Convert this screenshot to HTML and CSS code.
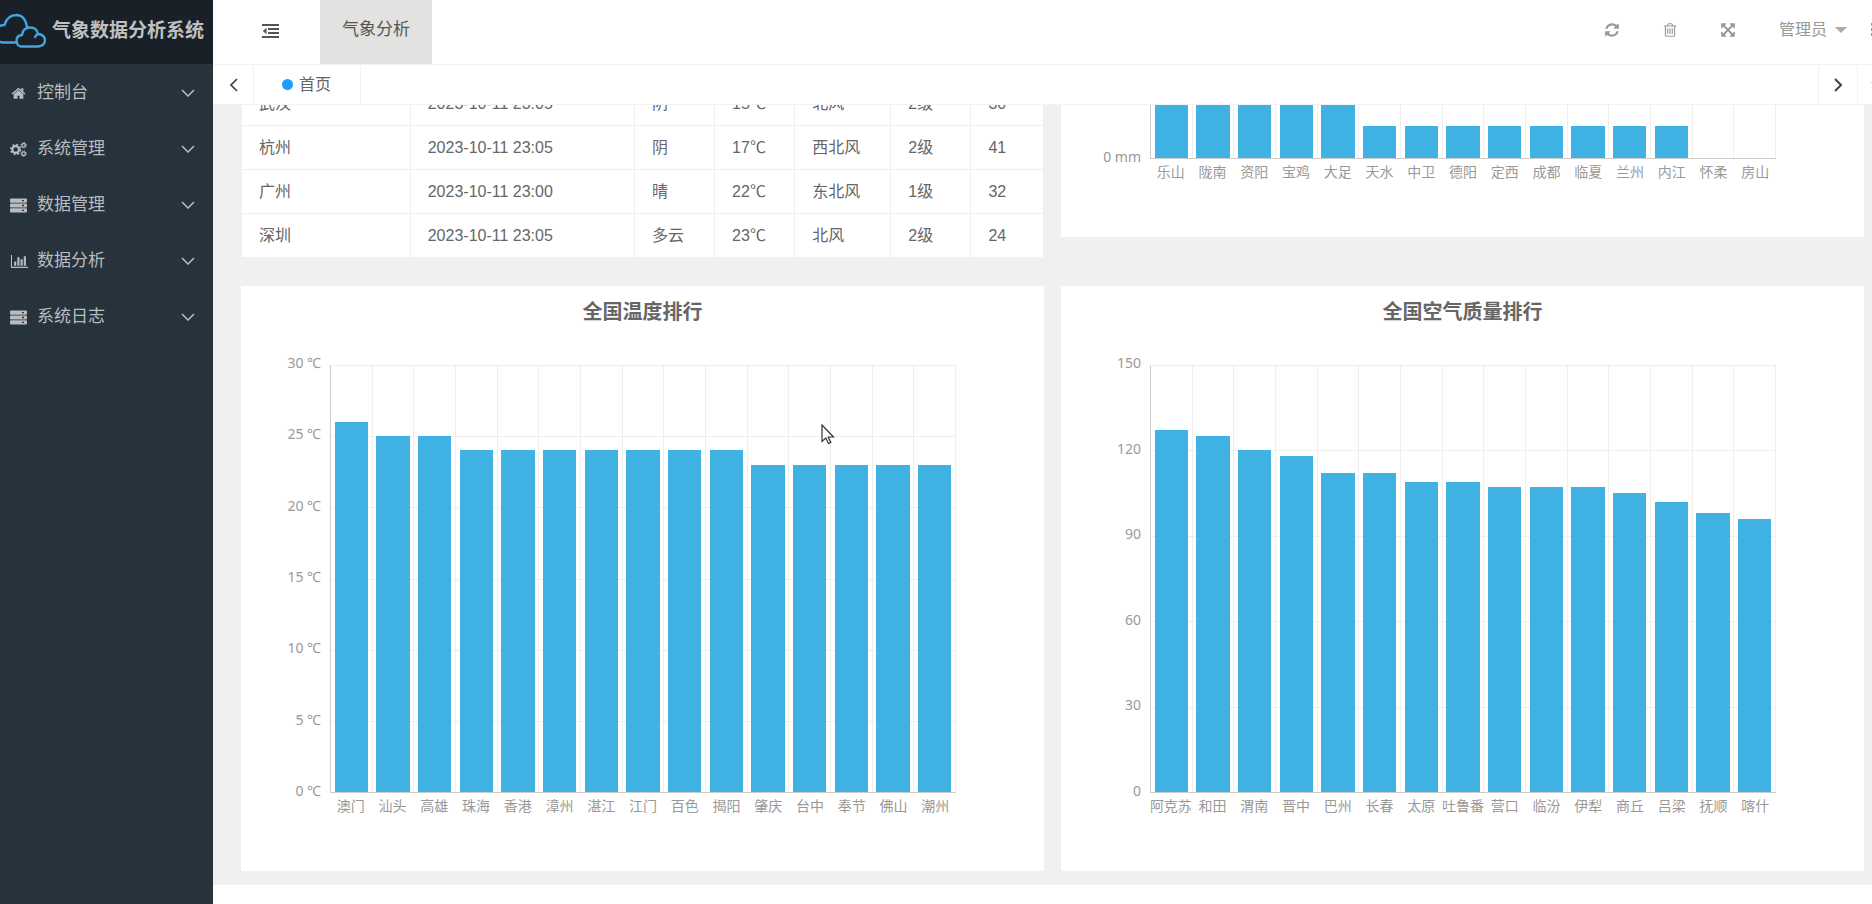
FILE: index.html
```html
<!DOCTYPE html>
<html lang="zh-CN">
<head>
<meta charset="utf-8">
<title>气象数据分析系统</title>
<link rel="stylesheet" href="styles.css">
</head>
<body>
<svg class="sprite" aria-hidden="true">
  <symbol id="chevron" viewBox="0 0 14 8"><path d="M1 1l6 6 6-6" fill="none" stroke="currentColor" stroke-width="1.5"/></symbol>
  <symbol id="server" viewBox="0 0 17 14"><path fill="currentColor" fill-rule="evenodd" d="M1 0h15q1 0 1 1v2.200q0 1-1 1H1Q0 4.200 0 3.200V1q0-1 1-1zm11 1.400v1.400h2V1.400zM1 4.900h15q1 0 1 1v2.200q0 1-1 1H1Q0 9.100 0 8.100V5.900q0-1 1-1zm11 1.400v1.400h2V6.300zM1 9.800h15q1 0 1 1V13q0 1-1 1H1q-1 0-1-1v-2.200q0-1 1-1zm11 1.400v1.400h2v-1.400z"/></symbol>
</svg>
<div class="app">
  <aside class="side">
    <div class="logo">
      <svg class="logo-icon" width="46" height="36" viewBox="0 0 46 36" fill="none" stroke="#42a5dc" stroke-width="2.4" stroke-linecap="round" stroke-linejoin="round">
        <path d="M17 29.500H3Q-5 29-5 20.500Q-4 12 4.500 12Q7 2 17 2Q25 2.500 27 13.500"/>
        <path d="M21 33.500H38Q45 33 45 27Q44.500 21.500 38 21Q37 14.500 30 14.500Q23 14.500 22 22Q16.500 22.500 16.500 28Q17 33 21 33.500M38 21Q36.500 21.500 35 24M27 13.500L28 14.500"/>
      </svg>
      <span>气象数据分析系统</span>
    </div>
    <nav class="menu">
      <a href="#"><svg class="mi" viewBox="0 0 1792 1792"><path fill="currentColor" d="M1472 992v480q0 26-19 45t-45 19h-384v-384h-256v384h-384q-26 0-45-19t-19-45v-480q0-1 .5-3t.5-3l575-474 575 474q1 2 1 6zm223-69l-62 74q-8 9-21 11h-3q-13 0-21-7l-692-577-692 577q-12 8-24 7-13-2-21-11l-62-74q-8-10-7-23.500t11-21.500l719-599q32-26 76-26t76 26l244 204v-195q0-14 9-23t23-9h192q14 0 23 9t9 23v408l219 182q10 8 11 21.500t-7 23.500z"/></svg><span>控制台</span><svg class="arrow"><use href="#chevron"/></svg></a>
      <a href="#"><svg class="mi" viewBox="0 0 18 16" fill="none" stroke="currentColor"><circle cx="6" cy="8" r="3.600" stroke-width="2.300"/><circle cx="6" cy="8" r="5.300" stroke-width="1.600" stroke-dasharray="2.080 2.080"/><circle cx="14.500" cy="3.500" r="1.900" stroke-width="1.400"/><circle cx="14.500" cy="3.500" r="2.900" stroke-width="1" stroke-dasharray="1.140 1.140"/><circle cx="14.500" cy="12.500" r="1.900" stroke-width="1.400"/><circle cx="14.500" cy="12.500" r="2.900" stroke-width="1" stroke-dasharray="1.140 1.140"/></svg><span>系统管理</span><svg class="arrow"><use href="#chevron"/></svg></a>
      <a href="#"><svg class="mi"><use href="#server"/></svg><span>数据管理</span><svg class="arrow"><use href="#chevron"/></svg></a>
      <a href="#"><svg class="mi wide" viewBox="0 0 2048 1792"><path fill="currentColor" d="M640 896v512h-256v-512h256zm384-512v1024h-256v-1024h256zm1024 1152v128h-2048v-1536h128v1408h1920zm-640-896v768h-256v-768h256zm384-384v1152h-256v-1152h256z"/></svg><span>数据分析</span><svg class="arrow"><use href="#chevron"/></svg></a>
      <a href="#"><svg class="mi"><use href="#server"/></svg><span>系统日志</span><svg class="arrow"><use href="#chevron"/></svg></a>
    </nav>
  </aside>

  <div class="main">
    <header class="header">
      <button class="toggle" aria-label="收起菜单"><svg width="18" height="14" viewBox="0 0 18 14"><path fill="currentColor" d="M0 0h17v2H0zM6 4h11v2H6zM6 8h11v2H6zM0 12h17v2H0zM4.500 3.800v6.400L.8 7z"/></svg></button>
      <a class="nav-item" href="#">气象分析</a>
      <div class="actions">
        <button aria-label="刷新"><svg viewBox="0 0 1792 1792"><path fill="currentColor" d="M1639 1056q0 5-1 7-64 268-268 434.500t-478 166.500q-146 0-282.500-55t-243.500-157l-129 129q-19 19-45 19t-45-19-19-45v-448q0-26 19-45t45-19h448q26 0 45 19t19 45-19 45l-137 137q71 66 161 102t187 36q134 0 250-65t186-179q11-17 53-117 8-23 30-23h192q13 0 22.500 9.500t9.500 22.500zm25-800v448q0 26-19 45t-45 19h-448q-26 0-45-19t-19-45 19-45l138-138q-148-137-349-137-134 0-250 65t-186 179q-11 17-53 117-8 23-30 23h-199q-13 0-22.500-9.500t-9.500-22.500v-7q65-268 270-434.500t480-166.500q146 0 284 55.500t245 156.500l130-129q19-19 45-19t45 19 19 45z"/></svg></button>
        <button aria-label="清理"><svg viewBox="0 0 1792 1792"><path fill="currentColor" d="M704 736v576q0 14-9 23t-23 9h-64q-14 0-23-9t-9-23v-576q0-14 9-23t23-9h64q14 0 23 9t9 23zm256 0v576q0 14-9 23t-23 9h-64q-14 0-23-9t-9-23v-576q0-14 9-23t23-9h64q14 0 23 9t9 23zm256 0v576q0 14-9 23t-23 9h-64q-14 0-23-9t-9-23v-576q0-14 9-23t23-9h64q14 0 23 9t9 23zm128 724v-948h-896v948q0 22 7 40.500t14.500 27 10.500 8.500h832q3 0 10.500-8.500t14.500-27 7-40.500zm-672-1076h448l-48-117q-7-9-17-11h-317q-10 2-17 11zm928 32v64q0 14-9 23t-23 9h-96v948q0 83-47 143.500t-113 60.500h-832q-66 0-113-58.500t-47-141.500v-952h-96q-14 0-23-9t-9-23v-64q0-14 9-23t23-9h309l70-167q15-37 54-63t79-26h320q40 0 79 26t54 63l70 167h309q14 0 23 9t9 23z"/></svg></button>
        <button aria-label="全屏"><svg viewBox="0 0 1792 1792"><path fill="currentColor" d="M1411 541l-355 355 355 355 144-144q29-31 70-14 39 17 39 59v448q0 26-19 45t-45 19h-448q-42 0-59-40-17-39 14-69l144-144-355-355-355 355 144 144q31 30 14 69-17 40-59 40h-448q-26 0-45-19t-19-45v-448q0-42 40-59 39-17 69 14l144 144 355-355-355-355-144 144q-19 19-45 19-12 0-24-5-40-17-40-59v-448q0-26 19-45t45-19h448q42 0 59 40 17 39-14 69l-144 144 355 355 355-355-144-144q-31-30-14-69 17-40 59-40h448q26 0 45 19t19 45v448q0 42-39 59-13 5-25 5-26 0-45-19z"/></svg></button>
        <button class="user">管理员<span class="caret"></span></button>
        <button class="more" aria-label="更多"><svg viewBox="0 0 4 16"><path fill="currentColor" d="M0 1h3v3H0zM0 6h3v3H0zM0 11h3v3H0z"/></svg></button>
      </div>
    </header>
    <div class="tabs">
      <button class="tab-btn prev" aria-label="上一页"><svg width="8" height="14" viewBox="0 0 8 14"><path d="M7 1L1 7l6 6" fill="none" stroke="currentColor" stroke-width="1.700"/></svg></button>
      <a class="tab" href="#"><i class="dot"></i>首页</a>
      <button class="tab-btn next" aria-label="下一页"><svg width="8" height="14" viewBox="0 0 8 14"><path d="M1 1l6 6-6 6" fill="none" stroke="currentColor" stroke-width="2"/></svg></button>
      <button class="tab-btn ops" aria-label="页签操作"><svg width="14" height="8"><use href="#chevron"/></svg></button>
    </div>
    <main class="viewport">
      <div class="board">
        <table class="weather">
          <colgroup><col class="c1"><col class="c2"><col class="c3"><col class="c4"><col class="c5"><col class="c6"><col class="c7"></colgroup>
          <tbody>
            <tr><td>武汉</td><td>2023-10-11 23:05</td><td>阴</td><td>15℃</td><td>北风</td><td>2级</td><td>30</td></tr>
            <tr><td>杭州</td><td>2023-10-11 23:05</td><td>阴</td><td>17℃</td><td>西北风</td><td>2级</td><td>41</td></tr>
            <tr><td>广州</td><td>2023-10-11 23:00</td><td>晴</td><td>22℃</td><td>东北风</td><td>1级</td><td>32</td></tr>
            <tr><td>深圳</td><td>2023-10-11 23:05</td><td>多云</td><td>23℃</td><td>北风</td><td>2级</td><td>24</td></tr>
          </tbody>
        </table>
        <section class="card rain" id="rain"></section>
        <section class="card" id="temp"></section>
        <section class="card" id="air"></section>
      </div>
    </main>
  </div>
</div>
<svg class="pointer" width="14" height="21" viewBox="0 0 14 21"><path d="M1 1v16.500l3.800-3.500 2.700 5.500 2.300-1.100-2.600-5.400h5.300z" fill="#fff" stroke="#333" stroke-width="1.200"/></svg>
<script src="charts.js"></script>
</body>
</html>
```
FILE: styles.css
```css
* { box-sizing: border-box; }
html, body { height: 100%; }
body {
  margin: 0;
  overflow: hidden;
  background: #fff;
  color: #666;
  font: 16px/24px "Liberation Sans", "Noto Sans CJK SC", sans-serif;
}
a { color: inherit; text-decoration: none; }
button { border: 0; padding: 0; background: none; font: inherit; color: inherit; }
svg { display: block; flex: none; }
.sprite { position: absolute; width: 0; height: 0; }

.app { display: flex; height: 100%; }

/* sidebar */
.side { width: 213px; flex: none; background: #27333c; color: #b9bdc0; }
.logo {
  display: flex; align-items: center; gap: 6px;
  height: 64px; padding-bottom: 2px;
  background: #1a2027;
  font-size: 19px; font-weight: 700; color: #c0c0c0;
  white-space: nowrap;
}
.menu { padding-top: 1px; }
.menu a {
  display: flex; align-items: center;
  height: 56px; padding: 0 18px 0 10px;
  font-size: 17px;
}
.menu span { flex: 1; padding-left: 10px; }
.mi { width: 17px; height: 15px; }
.wide { width: 19px; height: 15px; margin-right: -2px; }
.arrow { width: 14px; height: 8px; }

/* top bar */
.main { flex: 1; min-width: 0; display: flex; flex-direction: column; overflow: hidden; }
.header {
  display: flex; flex: none; height: 65px;
  border-bottom: 1px solid #f2f2f2;
}
.toggle { width: 107px; padding: 0 0 2px 49px; color: #555; }
.nav-item {
  padding: 18px 22px 0;
  background: #e2e2e0; color: #555; font-size: 17px;
}
.actions {
  display: flex; align-items: center;
  margin-left: auto; padding-bottom: 5px; color: #999;
}
.actions button { width: 58px; display: flex; justify-content: center; }
.actions svg { width: 16px; height: 16px; }
.actions .user { width: auto; align-items: center; gap: 8px; padding: 0 24px 0 22px; }
.caret { border: 6px solid transparent; border-top-color: #aaa; border-bottom: 0; }
.actions .more { width: 1px; justify-content: flex-start; overflow: hidden; }
.actions .more svg { width: 4px; }

.tabs { display: flex; flex: none; height: 40px; border-bottom: 1px solid #f2f2f2; }
.tab-btn { display: flex; align-items: center; justify-content: center; width: 40px; color: #444; }
.prev { width: 41px; padding-left: 2px; border-right: 1px solid #f2f2f2; }
.next { margin-left: auto; border-left: 1px solid #f2f2f2; border-right: 1px solid #f2f2f2; }
.ops { margin-right: -26px; }
.tab {
  display: flex; align-items: center; gap: 6px;
  padding: 0 29px 0 28px; border-right: 1px solid #f2f2f2;
}
.dot { width: 11px; height: 11px; border-radius: 50%; background: #1e9fff; }

/* content, scrolled to its end */
.viewport {
  flex: 1; min-height: 0; overflow: hidden;
  display: flex; flex-direction: column; justify-content: flex-end;
  padding-bottom: 19px;
}
.board {
  display: grid; grid-template-columns: 1fr 1fr; align-items: end;
  gap: 29px 17px;
  padding: 0 8px 14px 28px;
  background: #f0f0f0;
}
.weather {
  justify-self: center; width: calc(100% - 2px);
  table-layout: fixed; border-collapse: collapse;
  background: #fff;
}
.weather td { height: 44px; padding: 1px 17px 0; border-left: 1px solid #eee; border-top: 1px solid #eee; white-space: nowrap; }
.weather td:first-child { border-left: 0; }
.c1 { width: 21%; }
.c2 { width: 28%; }
.c3 { width: 10%; }
.c4 { width: 10%; }
.c5 { width: 12%; }
.c6 { width: 10%; }
.c7 { width: 9%; }

/* charts */
.card { background: #fff; font-family: "Noto Sans", "Noto Sans CJK SC", sans-serif; }
.rain { margin-bottom: 20px; }
.card h2 {
  margin: 0; padding-top: 12px; height: 79px;
  font-size: 20px; line-height: 28px; text-align: center; color: #666;
}
.chart {
  display: grid; grid-template-columns: 80px 1fr; column-gap: 9px;
  padding: 0 88px 55px 0;
  font-size: 14px; line-height: 20px; color: #999;
}
.y-axis {
  display: flex; flex-direction: column; justify-content: space-between;
  margin: -12px 0 -8px; text-align: right;
}
.plot { display: grid; height: 428px; border-left: 1px solid #ccc; border-bottom: 1px solid #ccc; }
.lines, .bars { grid-area: 1 / 1; display: flex; }
.lines { flex-direction: column; }
.lines div { flex: 1; border-top: 1px solid #eee; }
.slot { flex: 1; display: flex; align-items: flex-end; justify-content: center; border-right: 1px solid #eee; }
.bar { width: 82%; background: #3fb1e3; }
.x-axis { grid-column: 2; display: flex; padding-top: 3px; }
.x-axis span { flex: 1 1 0; min-width: 0; display: flex; justify-content: center; white-space: nowrap; }

.pointer { position: absolute; left: 821px; top: 424px; }
```
FILE: charts.js
```js
function drawChart(id, title, ticks, max, data) {
  var slots = data.map(function (d) {
    return '<div class="slot"><div class="bar" style="height:' + (d[1] / max * 100) + '%"></div></div>';
  }).join('');
  var names = data.map(function (d) { return '<span>' + d[0] + '</span>'; }).join('');
  var labels = ticks.map(function (t) { return '<span>' + t + '</span>'; }).join('');
  var lines = ticks.slice(1).map(function () { return '<div></div>'; }).join('');
  document.getElementById(id).innerHTML =
    '<h2>' + title + '</h2><div class="chart"><div class="y-axis">' + labels +
    '</div><div class="plot"><div class="lines">' + lines + '</div><div class="bars">' + slots +
    '</div></div><div class="x-axis">' + names + '</div></div>';
}

drawChart('rain', '', ['', '0 mm'], 40, [
  ['乐山', 6], ['陇南', 6], ['资阳', 6], ['宝鸡', 6], ['大足', 6],
  ['天水', 3], ['中卫', 3], ['德阳', 3], ['定西', 3], ['成都', 3],
  ['临夏', 3], ['兰州', 3], ['内江', 3], ['怀柔', 0], ['房山', 0]
]);

drawChart('temp', '全国温度排行', ['30 ℃', '25 ℃', '20 ℃', '15 ℃', '10 ℃', '5 ℃', '0 ℃'], 30, [
  ['澳门', 26], ['汕头', 25], ['高雄', 25], ['珠海', 24], ['香港', 24],
  ['漳州', 24], ['湛江', 24], ['江门', 24], ['百色', 24], ['揭阳', 24],
  ['肇庆', 23], ['台中', 23], ['奉节', 23], ['佛山', 23], ['潮州', 23]
]);

drawChart('air', '全国空气质量排行', ['150', '120', '90', '60', '30', '0'], 150, [
  ['阿克苏', 127], ['和田', 125], ['渭南', 120], ['晋中', 118], ['巴州', 112],
  ['长春', 112], ['太原', 109], ['吐鲁番', 109], ['营口', 107], ['临汾', 107],
  ['伊犁', 107], ['商丘', 105], ['吕梁', 102], ['抚顺', 98], ['喀什', 96]
]);
```
